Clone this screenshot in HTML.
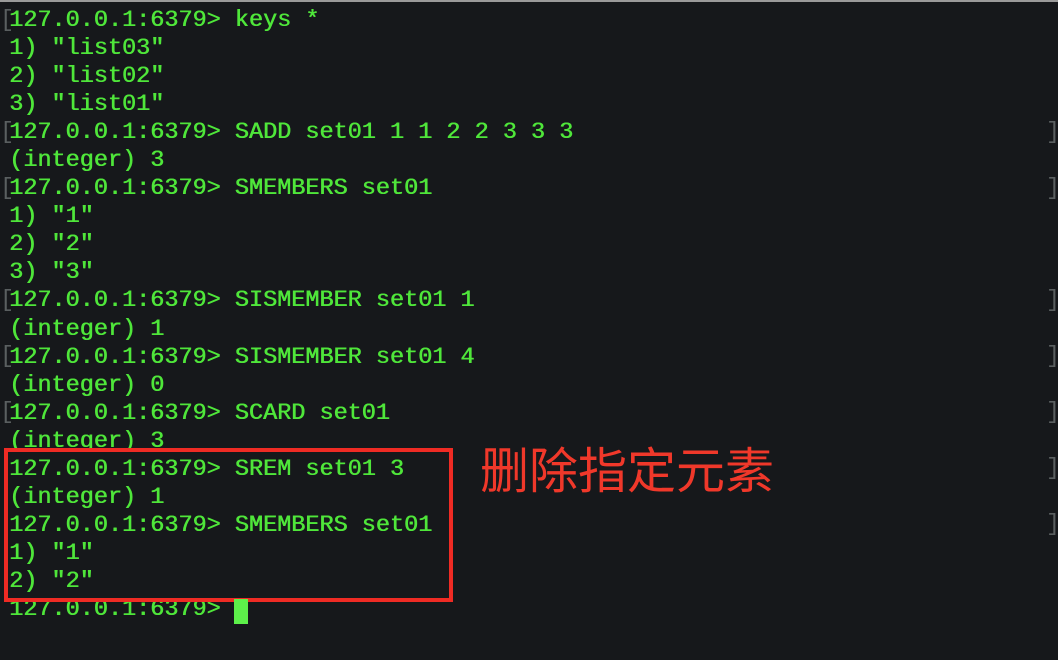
<!DOCTYPE html>
<html><head><meta charset="utf-8"><style>
html,body{margin:0;padding:0;}
body{width:1058px;height:660px;background:#16181b;position:relative;overflow:hidden;border-top:2px solid #9a9a9a;box-sizing:border-box;}
.t{position:absolute;left:9px;top:5px;font-family:"Liberation Mono",monospace;font-size:23.5px;line-height:28.05px;color:#4fe63a;white-space:pre;font-weight:normal;text-shadow:0.6px 0 0 #4fe63a;}
.b{position:absolute;left:0;color:#5a5f60;font-family:"Liberation Mono",monospace;font-size:23.5px;line-height:28.05px;}
.r{position:absolute;left:1046px;color:#5a5f60;font-family:"Liberation Mono",monospace;font-size:23.5px;line-height:28.05px;}
.box{position:absolute;left:4px;top:446px;width:441px;height:146px;border:4px solid #ef2b24;}
.cn{position:absolute;left:480px;top:430px;font-family:"Liberation Sans","Noto Sans CJK SC",sans-serif;font-size:49px;color:#f0382a;letter-spacing:0px;}
.cur{position:absolute;left:234px;top:597px;width:14px;height:25px;background:#5df04a;}
</style></head><body>
<div class="b" style="top:5px">[</div><div class="b" style="top:117px">[</div><div class="b" style="top:173px">[</div><div class="b" style="top:285px">[</div><div class="b" style="top:341px">[</div><div class="b" style="top:397px">[</div>
<div class="r" style="top:117px">]</div><div class="r" style="top:173px">]</div><div class="r" style="top:285px">]</div><div class="r" style="top:341px">]</div><div class="r" style="top:397px">]</div><div class="r" style="top:453px">]</div><div class="r" style="top:509px">]</div>
<div class="t">127.0.0.1:6379&gt; keys *
1) "list03"
2) "list02"
3) "list01"
127.0.0.1:6379&gt; SADD set01 1 1 2 2 3 3 3
(integer) 3
127.0.0.1:6379&gt; SMEMBERS set01
1) "1"
2) "2"
3) "3"
127.0.0.1:6379&gt; SISMEMBER set01 1
(integer) 1
127.0.0.1:6379&gt; SISMEMBER set01 4
(integer) 0
127.0.0.1:6379&gt; SCARD set01
(integer) 3
127.0.0.1:6379&gt; SREM set01 3
(integer) 1
127.0.0.1:6379&gt; SMEMBERS set01
1) "1"
2) "2"
127.0.0.1:6379&gt; </div>
<div class="box"></div>
<div class="cn">删除指定元素</div>
<div class="cur"></div>
</body></html>
